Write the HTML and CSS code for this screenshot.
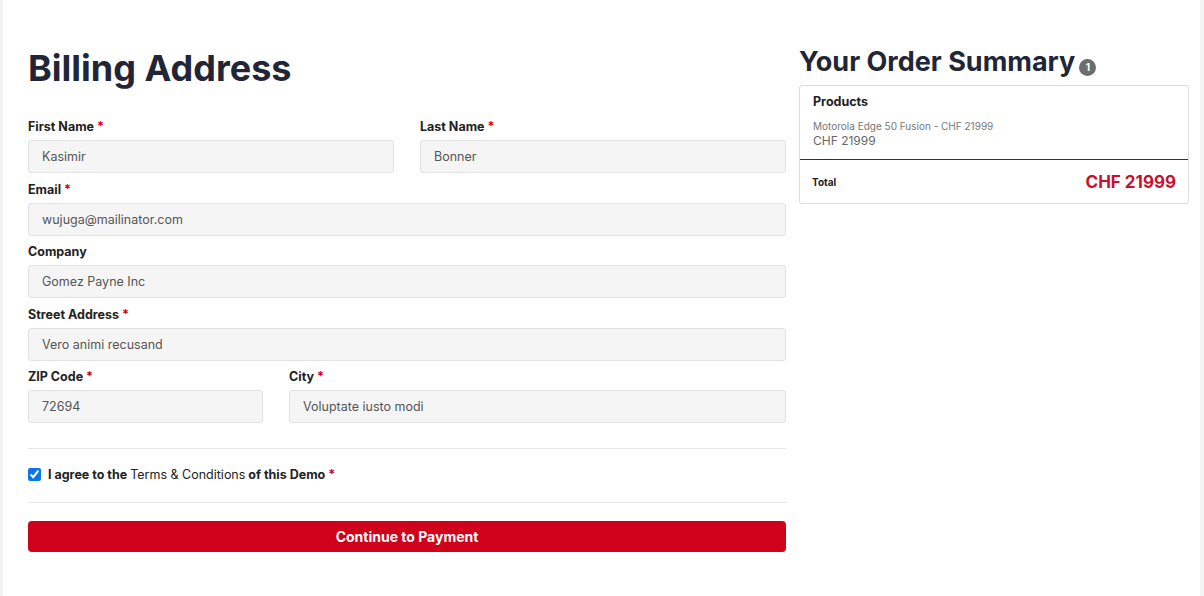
FILE: index.html
```html
<!DOCTYPE html>
<html lang="en">
<head>
<meta charset="utf-8">
<title>Billing Address</title>
<link rel="stylesheet" href="styles.css">
</head>
<body>
<div class="page">
  <div class="checkout">
    <form class="billing">
      <h1 class="title">Billing Address</h1>
      <div class="row two">
        <div class="field">
          <label class="label">First Name <span class="req">*</span></label>
          <input class="input" type="text" value="Kasimir">
        </div>
        <div class="field">
          <label class="label">Last Name <span class="req">*</span></label>
          <input class="input" type="text" value="Bonner">
        </div>
      </div>
      <div class="field">
        <label class="label">Email <span class="req">*</span></label>
        <input class="input" type="text" value="wujuga@mailinator.com">
      </div>
      <div class="field">
        <label class="label">Company</label>
        <input class="input" type="text" value="Gomez Payne Inc">
      </div>
      <div class="field">
        <label class="label">Street Address <span class="req">*</span></label>
        <input class="input" type="text" value="Vero animi recusand">
      </div>
      <div class="row zip">
        <div class="field">
          <label class="label">ZIP Code <span class="req">*</span></label>
          <input class="input" type="text" value="72694">
        </div>
        <div class="field">
          <label class="label">City <span class="req">*</span></label>
          <input class="input" type="text" value="Voluptate iusto modi">
        </div>
      </div>
      <div class="agree">
        <input class="check" type="checkbox" checked>
        <span class="agree-text">I agree to the <span class="terms">Terms &amp; Conditions</span> of this Demo <span class="req">*</span></span>
      </div>
      <button class="submit" type="button">Continue to Payment</button>
    </form>
    <aside class="summary">
      <h2 class="summary-title">Your Order Summary<span class="badge">1</span></h2>
      <div class="card">
        <div class="card-body">
          <div class="card-head">Products</div>
          <div class="item-name">Motorola Edge 50 Fusion - CHF 21999</div>
          <div class="item-price">CHF 21999</div>
        </div>
        <div class="card-total">
          <span class="total-label">Total</span>
          <span class="total-value">CHF 21999</span>
        </div>
      </div>
    </aside>
  </div>
</div>
</body>
</html>
```

FILE: styles.css
```css
* { box-sizing: border-box; }
html, body { margin: 0; padding: 0; }
body {
  background: #f3f3f3;
  font-family: "Inter", "Noto Sans", sans-serif;
  color: #222;
  height: 596px;
  overflow: hidden;
}
.page {
  margin-left: 3px;
  width: 1197px;
  height: 596px;
  background: #fff;
  padding: 0 11px 0 25px;
}
.checkout {
  display: flex;
  gap: 13px;
}
.billing {
  flex: 0 0 758px;
  width: 758px;
  padding-top: 46px;
}
.title {
  margin: 0 0 27px;
  font-size: 36px;
  line-height: 44px;
  font-weight: 700;
  color: #222536;
}
.row {
  display: grid;
  column-gap: 26px;
}
.row.two { grid-template-columns: 1fr 1fr; }
.row.zip { grid-template-columns: 235px 1fr; }
.field {
  display: flex;
  flex-direction: column;
  margin-bottom: 6.5px;
}
.label {
  font-size: 12.5px;
  line-height: 20px;
  font-weight: 700;
  color: #222;
  margin-bottom: 3px;
}
.req { color: #d0021b; }
.input {
  height: 33px;
  border: 1px solid #e2e2e2;
  border-radius: 3px;
  background: #f5f5f5;
  padding: 0 13px;
  font-family: inherit;
  font-size: 12.5px;
  color: #555;
}
.agree {
  margin-top: 18px;
  border-top: 1px solid #e6e6e6;
  border-bottom: 1px solid #e6e6e6;
  height: 55px;
  display: flex;
  align-items: center;
  gap: 7px;
  padding-bottom: 1px;
}
.check {
  margin: 0;
  width: 13px;
  height: 13px;
  accent-color: #0a74e8;
}
.agree-text {
  font-size: 12.5px;
  font-weight: 700;
  color: #222;
}
.terms { font-weight: 400; }
.submit {
  margin-top: 18px;
  width: 100%;
  height: 31px;
  border: none;
  border-radius: 4px;
  background: #d0021b;
  color: #fff;
  font-family: inherit;
  font-size: 14px;
  font-weight: 700;
}
.summary {
  flex: 0 0 390px;
  width: 390px;
  padding-top: 44px;
}
.summary-title {
  margin: 0 0 5px;
  font-size: 27px;
  line-height: 36px;
  font-weight: 700;
  color: #222536;
  display: flex;
  align-items: flex-end;
}
.badge {
  width: 17px;
  height: 17px;
  border-radius: 50%;
  background: #6d6d6d;
  color: #fff;
  font-size: 10px;
  line-height: 17px;
  text-align: center;
  margin: 0 0 4px 4px;
}
.card {
  border: 1px solid #dcdcdc;
  border-radius: 3px;
}
.card-body {
  padding: 8px 13px 11px;
  border-bottom: 1px solid #333;
}
.card-head {
  font-size: 12.5px;
  font-weight: 700;
  line-height: 16px;
  margin-bottom: 10px;
}
.item-name {
  font-size: 10px;
  line-height: 13px;
  color: #777;
}
.item-price {
  font-size: 12px;
  line-height: 15px;
  color: #666;
}
.card-total {
  height: 43px;
  padding: 0 12px 0 12px;
  display: flex;
  align-items: center;
  justify-content: space-between;
}
.total-label {
  font-size: 10px;
  font-weight: 700;
}
.total-value {
  font-size: 17px;
  font-weight: 700;
  color: #c8102e;
}
```
